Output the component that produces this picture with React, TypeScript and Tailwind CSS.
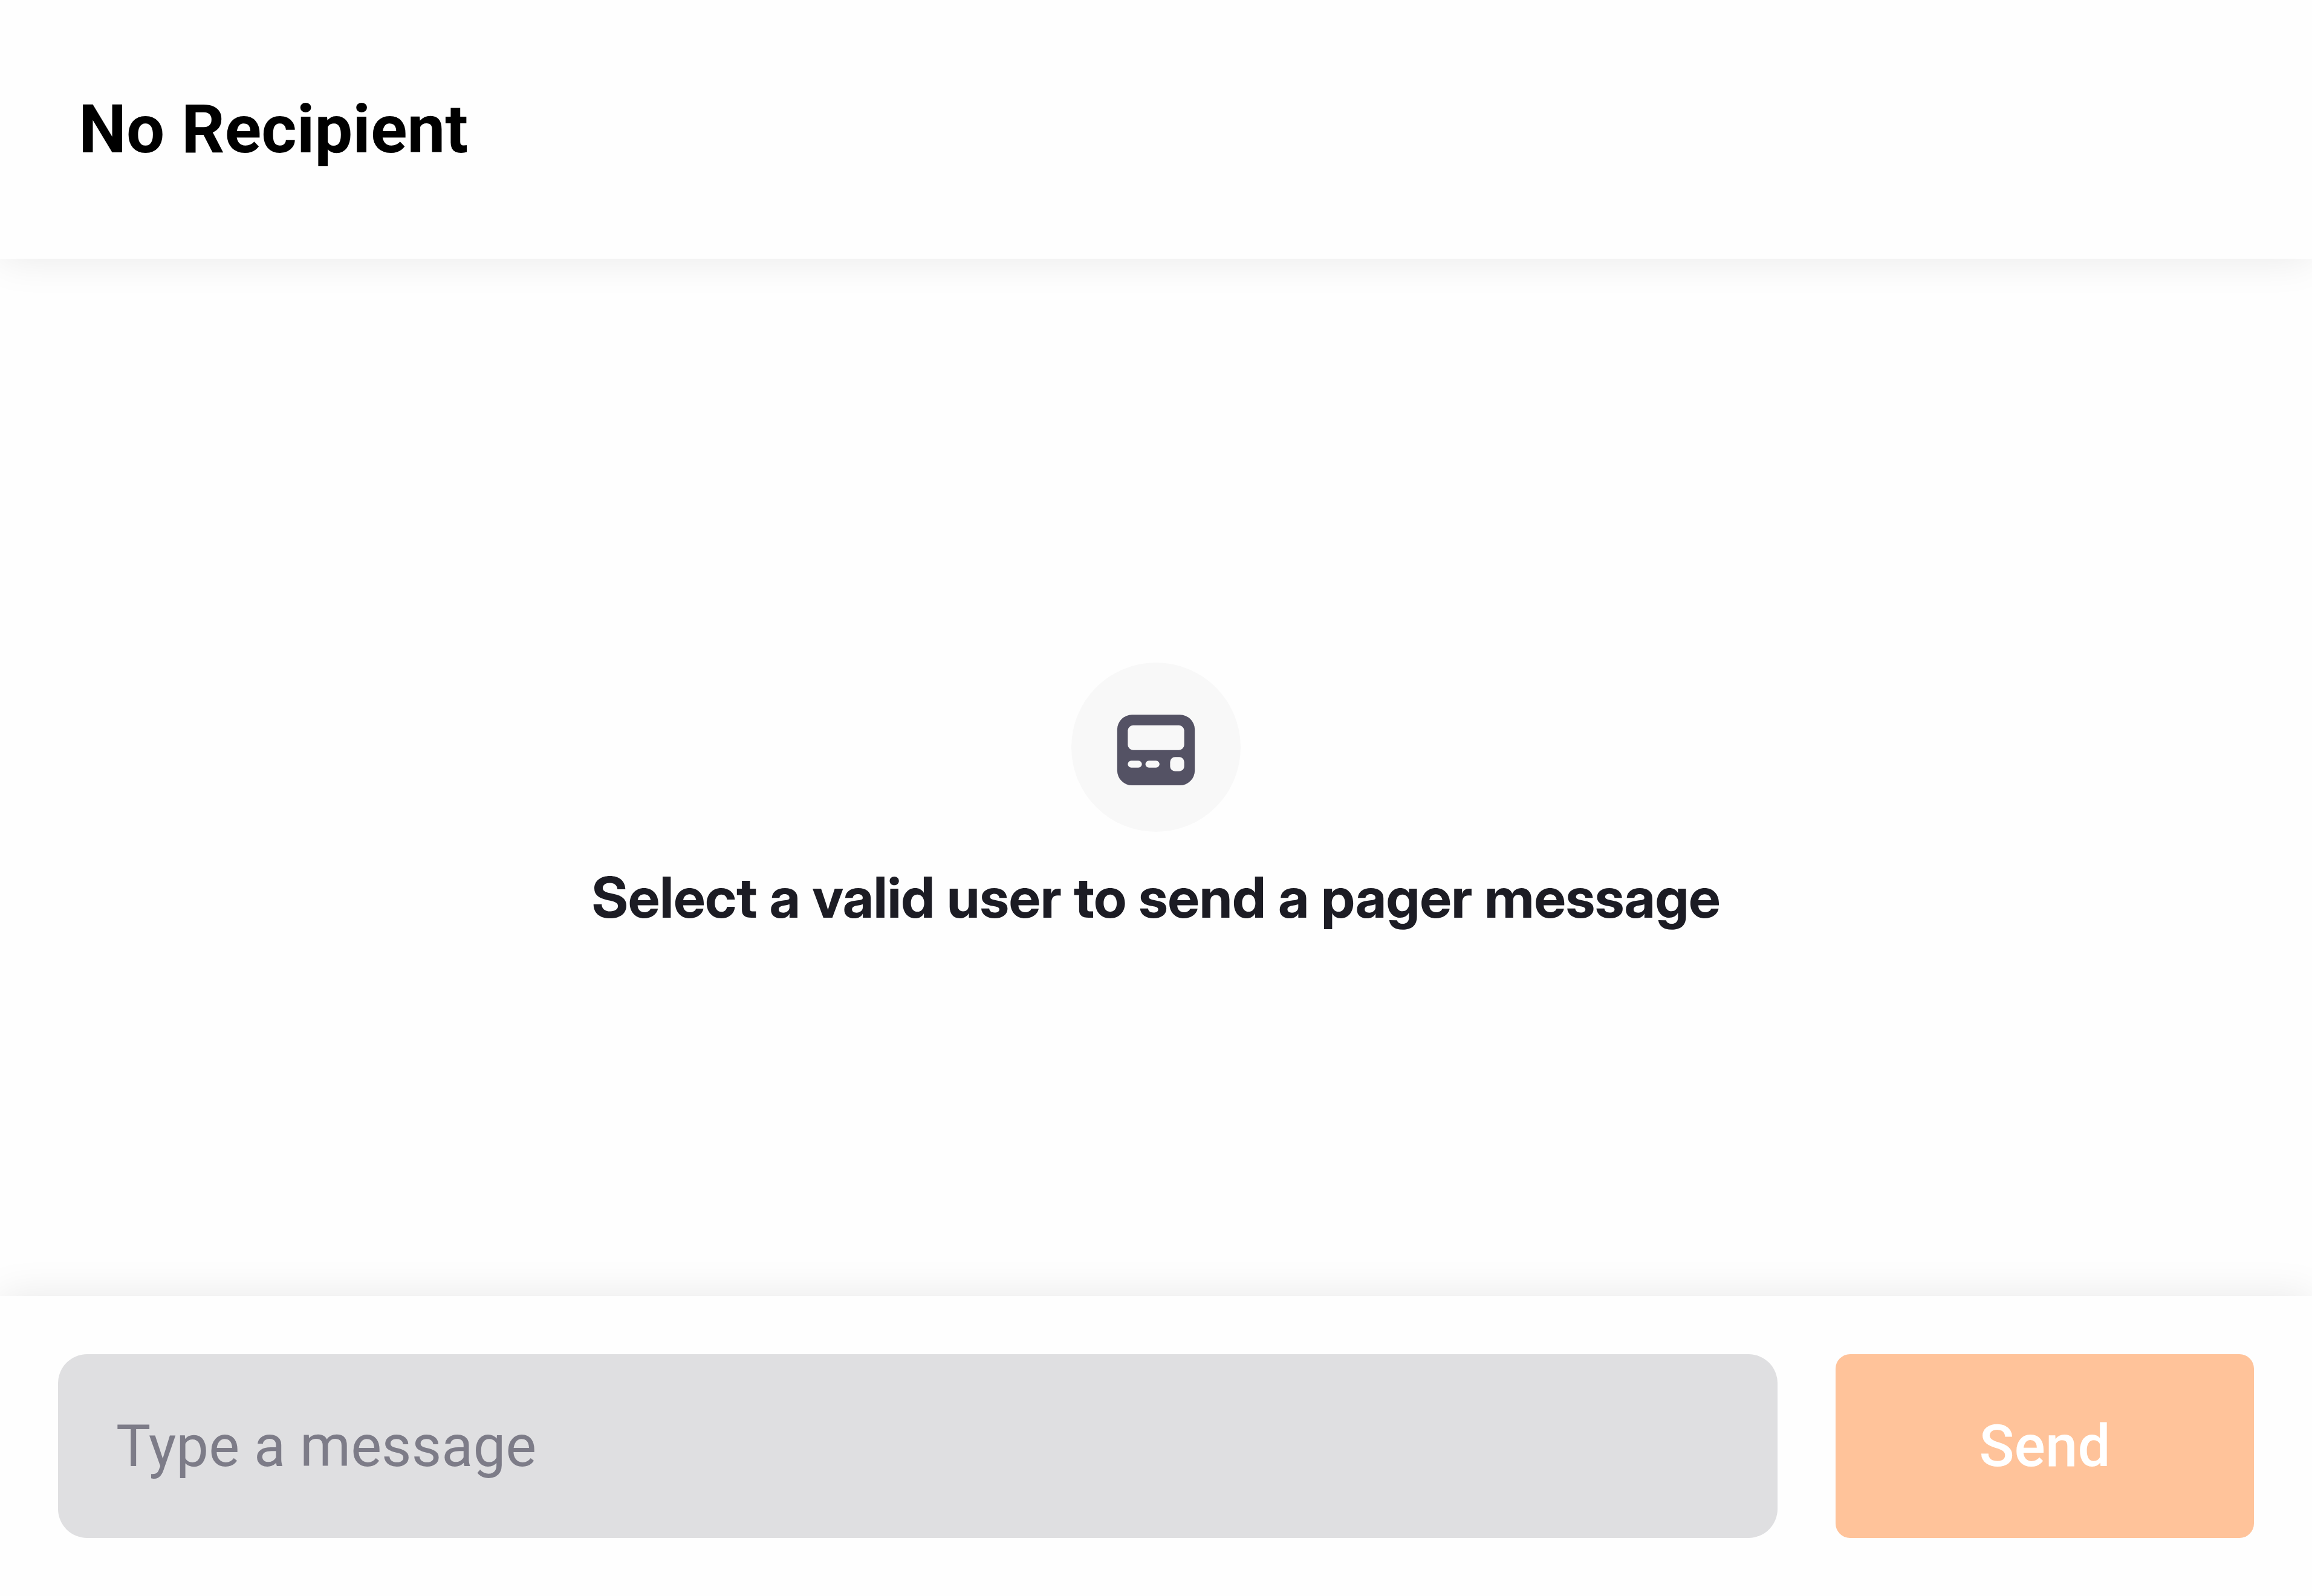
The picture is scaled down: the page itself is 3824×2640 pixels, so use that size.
import React from "react";

function PagerIcon() {
  return (
    <svg className="size-[140px]" viewBox="0 0 24 24" fill="none" aria-hidden="true">
      <rect x="1" y="2.8" width="22" height="20" rx="4.2" fill="#545264" />
      <rect x="4" y="5.8" width="16" height="7" rx="1.5" fill="#f8f8f8" />
      <rect x="4" y="15.8" width="4" height="2" rx="1" fill="#f8f8f8" />
      <rect x="9" y="15.8" width="4" height="2" rx="1" fill="#f8f8f8" />
      <rect x="16" y="14.8" width="4" height="4" rx="1.4" fill="#f8f8f8" />
    </svg>
  );
}

export default function App() {
  return (
    <div className="flex min-h-screen flex-col bg-[#fefefe] font-['Roboto',sans-serif]">
      <header className="px-[130px] py-32 shadow-[0_0_64px_rgba(0,0,0,0.09)]">
        <h1 className="text-[112px] leading-[172px] font-bold text-black">No Recipient</h1>
      </header>

      <main className="flex flex-1 flex-col items-center justify-center gap-12 pt-[68px]">
        <div className="flex size-[280px] items-center justify-center rounded-full bg-[#f8f8f8]">
          <PagerIcon />
        </div>
        <p className="text-center font-['Inter_Display','Inter',sans-serif] text-[93px] leading-[120px] font-bold text-[#1c1c24] [font-variation-settings:'opsz'_32]">
          Select a valid user to send a pager message
        </p>
      </main>

      <footer className="shadow-[0_0_64px_rgba(0,0,0,0.09)]">
        <form className="flex gap-24 p-24" onSubmit={(event) => event.preventDefault()}>
          <input
            type="text"
            aria-label="Message"
            placeholder="Type a message"
            className="h-[304px] min-w-0 flex-1 rounded-[48px] bg-[#dfdfe1] px-24 text-[96px] text-[#1c1c24] outline-none placeholder:text-[#7d7c88] placeholder:opacity-100"
          />
          <button
            type="submit"
            className="w-[692px] rounded-3xl bg-[#ffc39a] text-[96px] font-medium text-white"
          >
            Send
          </button>
        </form>
      </footer>
    </div>
  );
}
